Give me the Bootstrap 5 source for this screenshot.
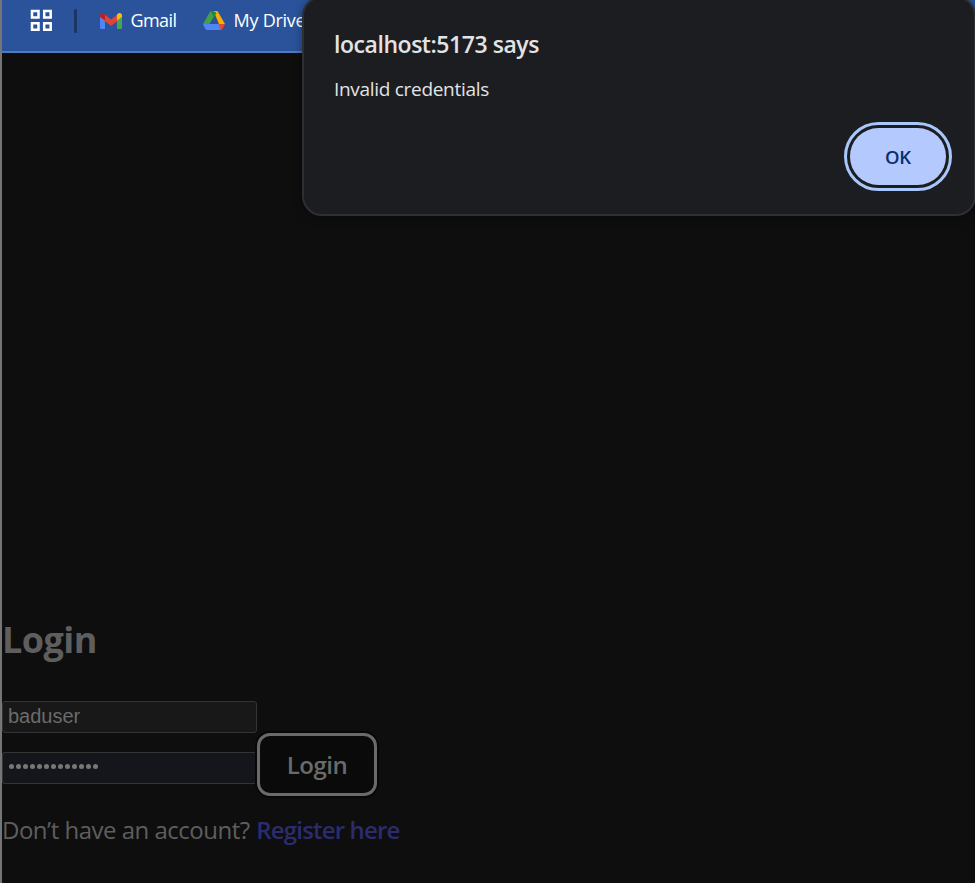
<!DOCTYPE html>
<html lang="en">
<head>
<meta charset="utf-8">
<meta name="viewport" content="width=device-width, initial-scale=1">
<title>Login</title>
<link rel="stylesheet" href="https://cdn.jsdelivr.net/npm/bootstrap@5.3.0/dist/css/bootstrap.min.css">
<style>
body{font-family:"Segoe UI","Open Sans","Noto Sans",sans-serif;background:#0e0e0e;color:#5e5e5e}
.window{height:883px;border-left:2px solid #767676}
.bookmarks{height:53px;background:#2a539b;border-bottom:2px solid #507bbb;color:#fff;font-size:18px;letter-spacing:-.25px;padding:0 0 10px 27.500px}
.bookmarks span{line-height:24px;margin-top:-1px}
.bookmarks .bm-gmail{letter-spacing:-.6px;width:47px}
.sep{width:3px;height:24px;border-radius:2px;background:#1d3562;margin:0 21.500px 0 21.500px}
.page{height:830px}
.page-title{font-size:36px;font-weight:700;line-height:48px;letter-spacing:-.55px;margin:0 0 37px}
.fields{gap:19px;margin-bottom:12px}
.field{width:255px;height:32px;border:1px solid #343434;border-radius:3px;background:#181818;color:#6b6b6b;font:20px/28px "Liberation Sans",Arial,sans-serif;padding:0 5px 2px;outline:0}
.field-filled{background:#15161c;width:254px;border-right:0;border-radius:3px 0 0 3px}
.dots{gap:2px;padding:0 6px 4px}
.dots i{width:5px;height:5px;border-radius:50%;background:#777}
.submit{width:120px;height:63px;border:3px solid #6a6a6a;border-radius:13px;background:#0a0a0a;color:#6a6a6a;font-size:24px;font-weight:600;letter-spacing:-.45px;line-height:32px;padding:0;box-shadow:0 0 0 2px #070707}
.register{font-size:24px;line-height:32px;letter-spacing:-.5px;margin:18px 0 37px}
.register a{color:#2b2c6e;font-weight:600;letter-spacing:-.83px;margin-left:1px}
.dialog-box{left:300px;top:-4px;width:674px;height:220px;background:#1c1d20;border:2px solid #2e2f34;border-radius:20px;box-shadow:0 2px 8px #0006;padding:30px 22px 0 30px;color:#e3e3e6}
.dialog-box h1{font-size:23px;font-weight:600;line-height:32px;letter-spacing:-.45px;margin:0 0 16px}
.dialog-box p{font-size:19px;line-height:26px;letter-spacing:-.3px;margin:0 0 20px}
.ok{width:108px;height:69px;border:3px solid #a8c7fa;border-radius:35px;padding:3px;background:#1c1d20}
.ok span{background:#b4cafe;border-radius:30px;color:#0b2d6b;font-size:18.500px;font-weight:600;letter-spacing:-.3px}
</style>
</head>
<body>
<div class="window position-relative overflow-hidden">
  <nav class="bookmarks d-flex align-items-center text-nowrap">
    <svg width="23" height="23" viewBox="0 0 23 23" fill="none" stroke="#fff" stroke-width="2.5"><path d="M2 2h6.500v6.500H2zM14.200 2h6.500v6.500h-6.500zM2 14.200h6.500v6.500H2zM14.200 14.200h6.500v6.500h-6.500z"/></svg>
    <div class="sep"></div>
    <svg class="me-2" width="24" height="18" viewBox="0 0 24 18"><path fill="#4f86f6" d="M1 4l5 4v9H2.500Q1 17 1 15.500z"/><path fill="#45a552" d="M18 8l5-5v12.500q0 1.500-1.500 1.500H18z"/><path fill="#e34436" d="M5 2l7 5.500L19 2v6.500l-7 5.300-7-5.300z"/><path fill="#b91f24" d="M1 3.500C1 1 3.800.3 5.500 2L6 2.500v6L1 5z"/><path fill="#f8bd05" d="M23 3.500C23 1 20.200.3 18.500 2l-.5.500v6L23 5z"/></svg>
    <span class="bm-gmail">Gmail</span>
    <svg class="ms-4 me-2" width="24" height="21" viewBox="0 0 24 21"><path fill="#43a047" d="M8.500 1h7L5.500 17 1 14z"/><path fill="#f7ae05" d="M11.500 1h4L23 14h-6z"/><path fill="#4f86f7" d="M1 14h16l2 6H5.500Q4 20 3 18.500z"/><path fill="#e54a2e" d="M16.500 14H23l-2.500 4.700-1.500 1.300z"/><path fill="#2a539b" d="M12 7.200l4 6.800H8z"/><path fill="#288638" d="M8.500 1h3l3 2-2.500 4.200z"/></svg>
    <span>My Drive</span>
  </nav>

  <main class="page d-flex flex-column justify-content-end">
    <h2 class="page-title">Login</h2>
    <form class="d-flex align-items-end" onsubmit="return false">
      <div class="fields d-flex flex-column">
        <input class="field" type="text" value="baduser" aria-label="Username">
        <div class="field field-filled dots d-flex align-items-center" role="textbox" aria-label="Password"><i></i><i></i><i></i><i></i><i></i><i></i><i></i><i></i><i></i><i></i><i></i><i></i><i></i></div>
      </div>
      <button class="submit" type="submit">Login</button>
    </form>
    <p class="register text-nowrap">Don’t have an account? <a class="text-decoration-none" href="#">Register here</a></p>
  </main>

  <div class="dialog-box position-absolute" role="dialog">
    <h1>localhost:5173 says</h1>
    <p>Invalid credentials</p>
    <div class="d-flex justify-content-end"><button class="ok d-flex"><span class="w-100 h-100 d-flex align-items-center justify-content-center">OK</span></button></div>
  </div>
</div>
<script src="https://cdn.jsdelivr.net/npm/bootstrap@5.3.0/dist/js/bootstrap.bundle.min.js"></script>
</body>
</html>
